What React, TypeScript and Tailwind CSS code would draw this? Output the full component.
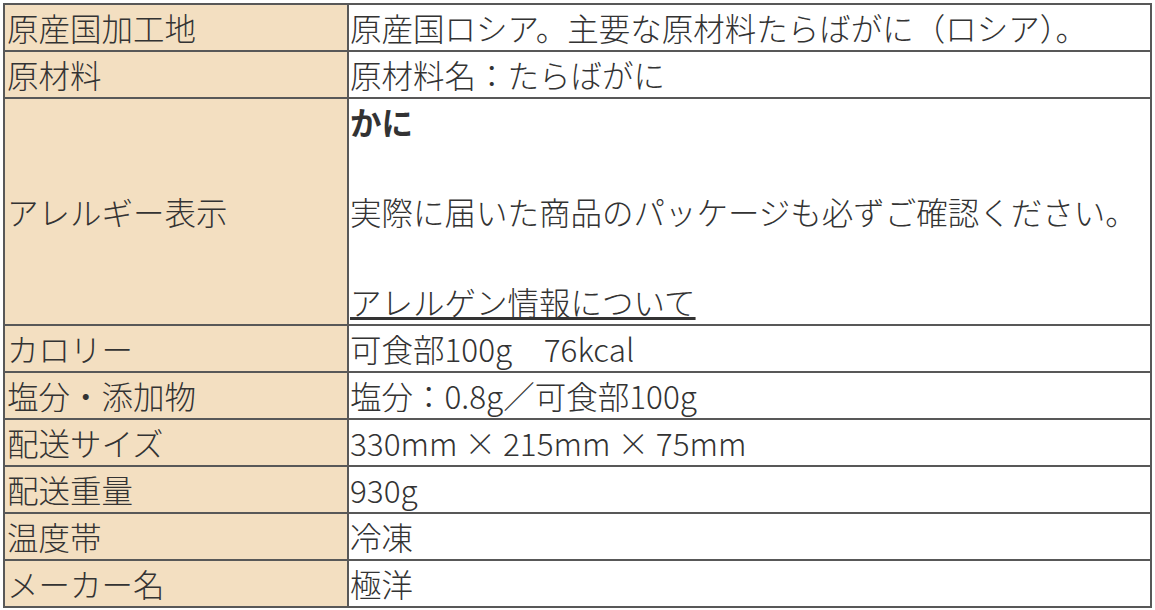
const rows: { label: string; value: React.ReactNode }[] = [
  { label: '原産国加工地', value: '原産国ロシア。主要な原材料たらばがに（ロシア）。' },
  { label: '原材料', value: '原材料名：たらばがに' },
  {
    label: 'アレルギー表示',
    value: (
      <>
        <strong className="font-bold">かに</strong>
        <br />
        <br />
        実際に届いた商品のパッケージも必ずご確認ください。
        <br />
        <br />
        <a href="#" className="underline text-[#333]">アレルゲン情報について</a>
      </>
    ),
  },
  { label: 'カロリー', value: '可食部100g　76kcal' },
  { label: '塩分・添加物', value: '塩分：0.8g／可食部100g' },
  { label: '配送サイズ', value: '330mm × 215mm × 75mm' },
  { label: '配送重量', value: '930g' },
  { label: '温度帯', value: '冷凍' },
  { label: 'メーカー名', value: '極洋' },
]

export default function App() {
  return (
    <div className="bg-white p-[3px]" style={{ fontFamily: '"Noto Sans CJK JP", "Noto Sans", sans-serif' }}>
      <table className="w-full table-fixed border-collapse border-2 border-[#585858] text-[31.5px] leading-[45px] font-light text-[#333]">
        <tbody>
          {rows.map((row) => (
            <tr key={row.label}>
              <th className="w-[344px] border-2 border-[#585858] bg-[#f3dfc1] px-[2px] text-left font-light align-middle whitespace-nowrap">
                {row.label}
              </th>
              <td className="border-2 border-[#585858] bg-white px-[1px] align-middle whitespace-nowrap">{row.value}</td>
            </tr>
          ))}
        </tbody>
      </table>
    </div>
  )
}
